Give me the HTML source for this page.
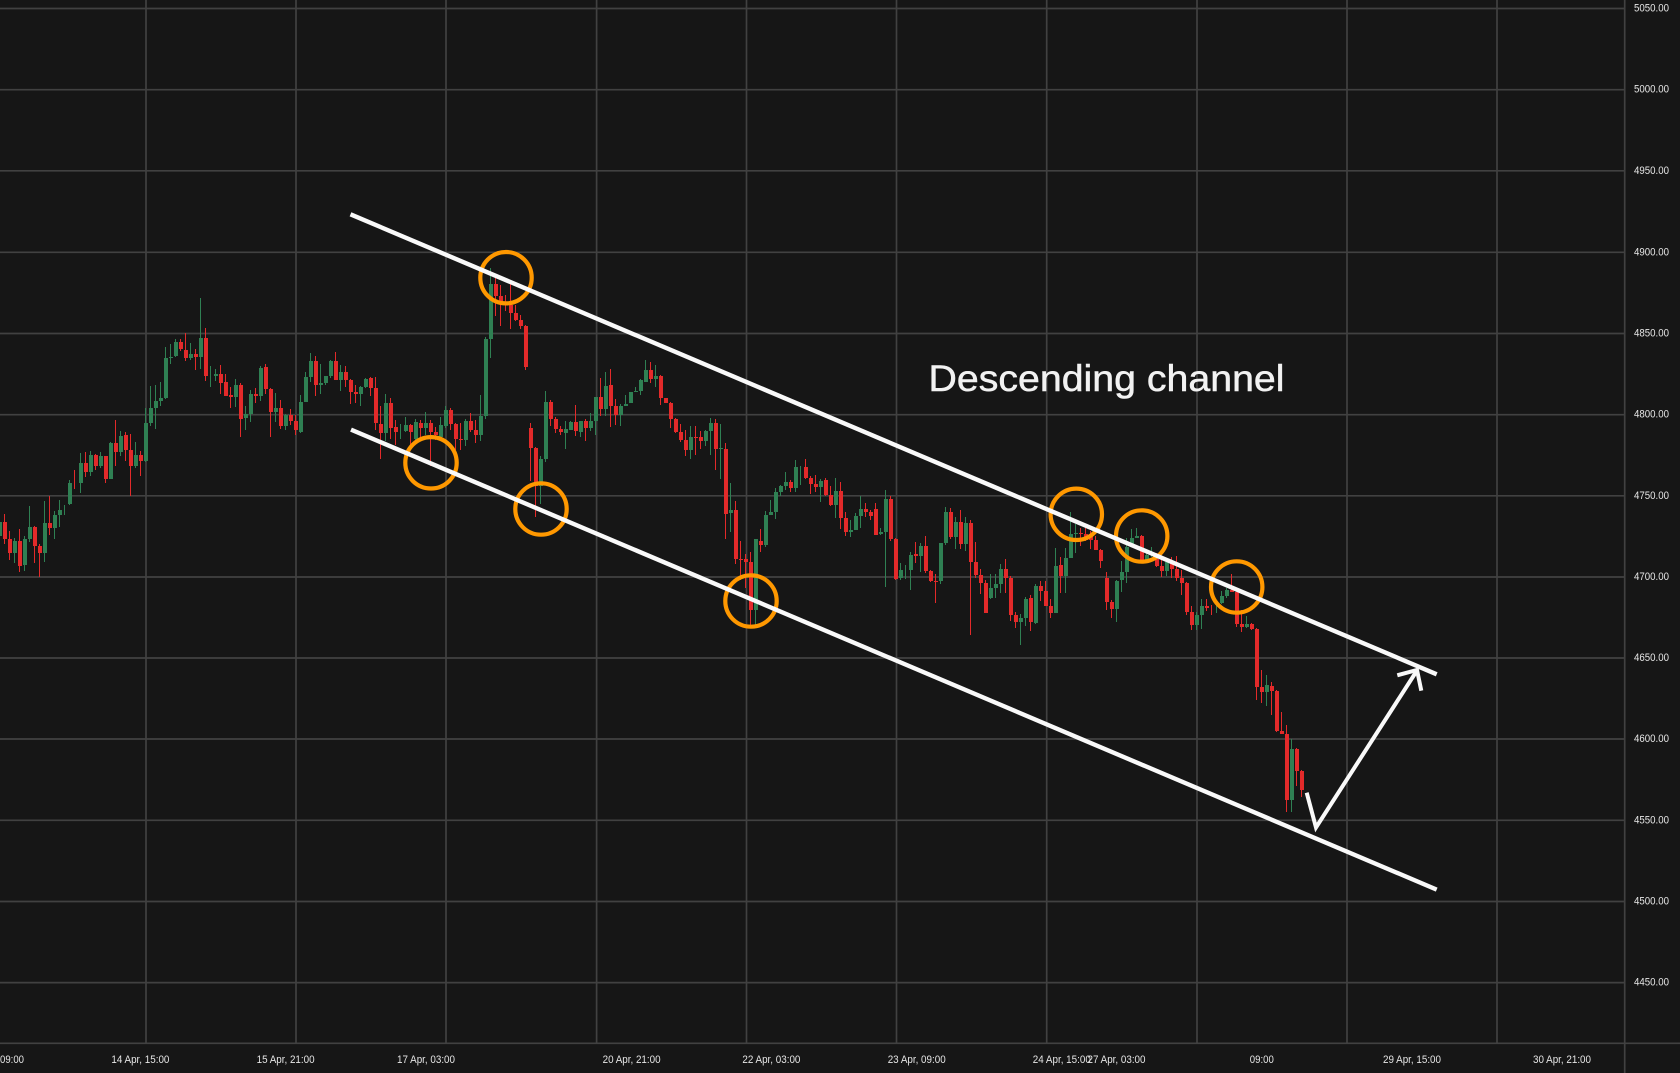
<!DOCTYPE html>
<html><head><meta charset="utf-8"><title>Descending channel</title>
<style>
html,body{margin:0;padding:0;background:#161616;overflow:hidden}
svg{display:block}
text{font-family:"Liberation Sans",sans-serif}
</style></head><body>
<svg width="1680" height="1073" viewBox="0 0 1680 1073" xmlns="http://www.w3.org/2000/svg">
<rect width="1680" height="1073" fill="#161616"/>
<g stroke="#414141" stroke-width="1.7" fill="none">
<path d="M0 8.5H1625M0 89.7H1625M0 170.8H1625M0 252.3H1625M0 333.5H1625M0 414.7H1625M0 495.8H1625M0 577H1625M0 658H1625M0 739H1625M0 820.3H1625M0 901.5H1625M0 982.6H1625"/>
<path d="M146 0V1043M296 0V1043M446 0V1043M596.6 0V1043M746.5 0V1043M896.5 0V1043M1046.7 0V1043M1197 0V1043M1347 0V1043M1497 0V1043"/>
<path d="M1624.7 0V1073M0 1043.3H1680"/>
</g>
<g fill="none" shape-rendering="crispEdges">
<path stroke="#2f8053" stroke-width="1" transform="translate(-.5 0)" d="M0 512V537M15 538V563M25 536V571M30 506V542M45 501V562M55 511V539M60 500V527M65 505V515M70 480V505M81 453V493M91 451V476M101 452V468M111 442V479M121 431V456M136 442V468M146 408V462M151 386V426M156 385V429M161 382V406M166 347V399M171 344V364M176 339V357M191 343V360M201 298V369M211 366V387M216 369V381M236 379V407M246 406V430M251 390V422M261 366V401M276 393V422M286 414V430M301 395V433M306 372V402M311 353V382M321 364V394M326 376V385M331 360V378M341 365V391M361 386V406M366 378V388M386 394V441M401 424V439M406 417V432M416 419V443M426 412V435M441 417V440M446 406V428M466 419V446M481 395V441M486 337V419M491 268V358M541 456V504M546 391V462M566 421V449M571 421V430M581 421V437M591 413V431M596 397V435M606 372V416M621 404V426M626 395V406M631 392V403M636 387V392M641 379V395M646 360V382M656 365V387M691 426V459M706 430V446M711 418V455M721 424V479M731 483V532M756 539V625M766 511V547M771 500V515M776 488V519M781 485V496M786 472V490M796 460V492M801 466V485M821 479V502M836 478V518M851 520V537M856 513V530M861 496V528M881 528V535M886 490V587M901 563V580M906 565V579M911 552V590M921 543V572M941 543V584M946 507V545M956 517V549M966 517V551M991 574V599M996 574V598M1001 564V593M1021 614V645M1026 597V626M1036 584V624M1056 548V613M1066 548V593M1071 512V558M1076 524V553M1117 580V622M1122 561V592M1127 538V583M1132 529V547M1137 528V538M1147 550V560M1152 547V557M1167 560V576M1197 612V630M1202 599V629M1217 603V613M1222 591V604M1227 588V598M1247 616V628M1267 675V706M1292 739V812"/>
<path stroke="#2f8053" stroke-width="4" d="M0 522V536M15 541V553M25 539V565M30 527V539M45 523V553M55 515V528M60 510V515M70 483V504M81 463V483M91 455V472M101 456V466M111 443V479M121 436V452M136 455V466M146 423V461M151 408V423M156 401V408M161 398V401M166 358V398M171 357V358M176 342V356M191 354V358M201 338V357M216 374V376M236 385V397M246 414V418M251 394V414M261 368V396M276 408V412M286 415V426M301 402V432M306 377V402M311 361V377M321 383V385M326 376V383M331 361V376M341 372V380M361 387V394M366 379V387M386 403V433M406 425V431M416 422V439M426 423V428M441 425V437M446 410V426M466 421V440M481 416V435M486 339V416M491 284V339M541 459V486M546 402V459M566 429V433M571 422V430M581 421V432M591 421V428M596 397V421M606 386V409M621 406V415M626 404V406M631 392V403M636 391V392M641 380V391M646 370V382M656 376V379M691 437V450M706 431V441M711 423V431M721 448V449M731 510V513M756 539V610M766 515V545M771 512V515M776 492V512M781 486V492M786 482V486M796 467V488M821 481V487M836 491V505M851 530V532M856 516V530M861 509V516M881 532V534M886 499V532M901 570V578M911 555V570M921 546V556M941 543V581M946 512V543M956 522V537M966 523V544M991 588V598M996 584V588M1001 569V584M1021 618V622M1026 599V618M1036 586V623M1056 566V613M1066 558V576M1071 534V558M1076 533V534M1117 581V609M1122 572V580M1127 547V572M1132 538V547M1137 536V538M1147 555V560M1167 562V571M1197 615V625M1202 606V615M1222 596V603M1227 590V596M1247 624V627M1267 685V692M1292 749V800"/>
<path stroke="#e32a2a" stroke-width="1" transform="translate(-.5 0)" d="M5 514V544M10 531V560M20 529V572M35 526V563M40 544V577M50 496V535M75 470V489M86 452V477M96 454V470M106 456V483M116 420V466M126 432V461M131 434V496M141 451V476M181 339V351M186 333V361M196 349V370M206 328V381M221 365V394M226 374V396M231 387V408M241 383V437M256 388V403M266 364V394M271 388V437M281 400V429M291 409V425M296 415V435M316 356V396M336 352V380M346 366V387M351 379V404M356 385V403M371 377V396M376 377V430M381 406V459M391 398V439M396 420V445M411 424V446M421 420V439M431 420V466M436 427V440M451 408V430M456 423V450M461 423V450M471 413V432M476 420V443M496 278V316M501 285V326M506 295V311M511 284V329M516 305V321M521 315V329M526 325V370M531 423V481M536 447V517M551 400V426M556 417V433M561 426V435M576 405V436M586 419V441M601 378V416M611 369V427M616 399V425M651 362V383M661 375V405M666 398V403M671 402V428M676 418V433M681 424V442M686 430V456M696 426V455M701 431V449M716 419V470M726 443V539M736 501V564M741 541V580M746 554V588M751 552V625M761 529V552M791 480V492M806 459V479M811 476V494M816 475V492M826 478V496M831 486V506M841 482V529M846 512V536M866 503V517M871 510V520M876 503V535M891 496V541M896 538V580M916 542V563M926 536V573M931 570V582M936 574V603M951 508V539M961 510V549M971 520V635M976 542V578M981 569V594M986 580V613M1006 559V593M1011 576V621M1016 612V628M1031 595V631M1041 581V601M1046 581V606M1051 599V618M1061 557V593M1081 528V546M1086 528V541M1091 531V549M1096 536V550M1101 549V568M1107 572V610M1112 600V618M1142 535V560M1157 553V567M1162 560V577M1172 557V578M1177 556V581M1182 570V595M1187 582V615M1192 606V630M1207 599V611M1212 605V615M1232 574V592M1237 592V627M1242 610V632M1252 623V630M1257 628V700M1262 670V703M1272 682V715M1277 690V732M1282 712V734M1287 725V812M1297 748V786M1302 770V797"/>
<path stroke="#e32a2a" stroke-width="4" d="M5 522V539M10 539V553M20 541V566M35 527V546M40 546V553M50 523V528M86 463V472M96 455V466M106 456V479M116 443V452M126 435V450M131 450V466M141 455V461M181 342V349M186 350V358M196 354V357M206 338V376M221 374V383M226 382V396M231 395V397M241 385V419M256 394V396M266 367V389M271 389V412M281 408V426M291 415V421M296 421V430M316 361V385M336 361V380M346 372V380M351 380V392M356 392V394M371 378V388M376 388V423M381 424V433M391 403V428M396 427V432M411 425V432M421 423V428M431 423V432M436 432V435M451 410V424M456 424V439M461 439V440M471 421V430M476 430V435M496 284V296M501 296V302M506 302V304M511 305V313M516 313V320M521 320V326M526 326V367M531 428V448M536 448V486M551 402V419M556 419V429M561 429V432M576 422V431M586 421V428M601 397V409M611 385V406M616 406V415M651 370V379M661 376V398M666 398V403M671 403V419M676 419V432M681 432V440M686 440V450M696 437V438M701 437V441M716 423V449M726 449V514M736 510V559M741 559V560M746 559V562M751 562V610M761 541V545M791 482V488M806 467V478M811 478V484M816 484V487M826 480V495M831 495V505M841 491V518M846 518V532M866 509V512M871 512V516M876 509V535M891 499V539M896 539V579M916 554V556M926 546V571M931 571V581M936 581V582M951 512V537M961 522V544M971 523V562M976 562V575M981 575V583M986 583V613M1006 569V578M1011 578V615M1016 615V622M1031 598V622M1041 586V591M1046 591V606M1051 606V613M1061 565V576M1081 533V534M1086 534V540M1091 536V540M1096 540V550M1101 550V561M1107 578V602M1112 602V609M1142 536V560M1157 559V566M1162 566V571M1172 562V569M1177 569V578M1182 578V583M1187 583V612M1192 612V625M1207 606V608M1232 590V592M1237 592V624M1242 624V627M1252 624V629M1257 629V687M1262 687V692M1272 686V691M1277 691V731M1282 731V734M1287 734V800M1297 749V771M1302 771V790"/>
</g>
<g fill="none" stroke="#ff9800" stroke-width="4.2">
<circle cx="506" cy="277.7" r="25.7"/>
<circle cx="431" cy="462.8" r="25.7"/>
<circle cx="541" cy="509" r="25.7"/>
<circle cx="751" cy="601" r="25.7"/>
<circle cx="1076.3" cy="514.3" r="25.7"/>
<circle cx="1141.7" cy="536" r="25.7"/>
<circle cx="1236.7" cy="587" r="25.7"/>
</g>
<g fill="none" stroke="#f9f9f9" stroke-width="4.4">
<path d="M350.5 214.3L1436.7 674.3"/>
<path d="M351 429.6L1436.7 889.6"/>
</g>
<g fill="none" stroke="#f9f9f9" stroke-width="4" stroke-linejoin="miter" stroke-miterlimit="12">
<path d="M1306.7 792.7L1316 827.5L1416 672"/>
<path d="M1397.3 675.3L1417 670L1421.3 690.7"/>
</g>
<text x="928.5" y="391" font-size="37" fill="#f2f2f2" stroke="#f2f2f2" stroke-width=".5" textLength="356" lengthAdjust="spacingAndGlyphs">Descending channel</text>
<g font-size="11" fill="#e6e6e6">
<text x="1634" y="11.5" textLength="35" lengthAdjust="spacingAndGlyphs">5050.00</text>
<text x="1634" y="92.7" textLength="35" lengthAdjust="spacingAndGlyphs">5000.00</text>
<text x="1634" y="173.8" textLength="35" lengthAdjust="spacingAndGlyphs">4950.00</text>
<text x="1634" y="255.3" textLength="35" lengthAdjust="spacingAndGlyphs">4900.00</text>
<text x="1634" y="336.5" textLength="35" lengthAdjust="spacingAndGlyphs">4850.00</text>
<text x="1634" y="417.7" textLength="35" lengthAdjust="spacingAndGlyphs">4800.00</text>
<text x="1634" y="498.8" textLength="35" lengthAdjust="spacingAndGlyphs">4750.00</text>
<text x="1634" y="580" textLength="35" lengthAdjust="spacingAndGlyphs">4700.00</text>
<text x="1634" y="661" textLength="35" lengthAdjust="spacingAndGlyphs">4650.00</text>
<text x="1634" y="742" textLength="35" lengthAdjust="spacingAndGlyphs">4600.00</text>
<text x="1634" y="823.3" textLength="35" lengthAdjust="spacingAndGlyphs">4550.00</text>
<text x="1634" y="904.5" textLength="35" lengthAdjust="spacingAndGlyphs">4500.00</text>
<text x="1634" y="985.6" textLength="35" lengthAdjust="spacingAndGlyphs">4450.00</text>
<text x="0" y="1063" textLength="24" lengthAdjust="spacingAndGlyphs">09:00</text>
<text x="111.4" y="1063" textLength="58" lengthAdjust="spacingAndGlyphs">14 Apr, 15:00</text>
<text x="256.6" y="1063" textLength="58" lengthAdjust="spacingAndGlyphs">15 Apr, 21:00</text>
<text x="397" y="1063" textLength="58" lengthAdjust="spacingAndGlyphs">17 Apr, 03:00</text>
<text x="602.6" y="1063" textLength="58" lengthAdjust="spacingAndGlyphs">20 Apr, 21:00</text>
<text x="742.4" y="1063" textLength="58" lengthAdjust="spacingAndGlyphs">22 Apr, 03:00</text>
<text x="887.7" y="1063" textLength="58" lengthAdjust="spacingAndGlyphs">23 Apr, 09:00</text>
<text x="1032.8" y="1063" textLength="58" lengthAdjust="spacingAndGlyphs">24 Apr, 15:00</text>
<text x="1087.5" y="1063" textLength="58" lengthAdjust="spacingAndGlyphs">27 Apr, 03:00</text>
<text x="1249.8" y="1063" textLength="24" lengthAdjust="spacingAndGlyphs">09:00</text>
<text x="1383" y="1063" textLength="58" lengthAdjust="spacingAndGlyphs">29 Apr, 15:00</text>
<text x="1533" y="1063" textLength="58" lengthAdjust="spacingAndGlyphs">30 Apr, 21:00</text>
</g>
</svg>
</body></html>
